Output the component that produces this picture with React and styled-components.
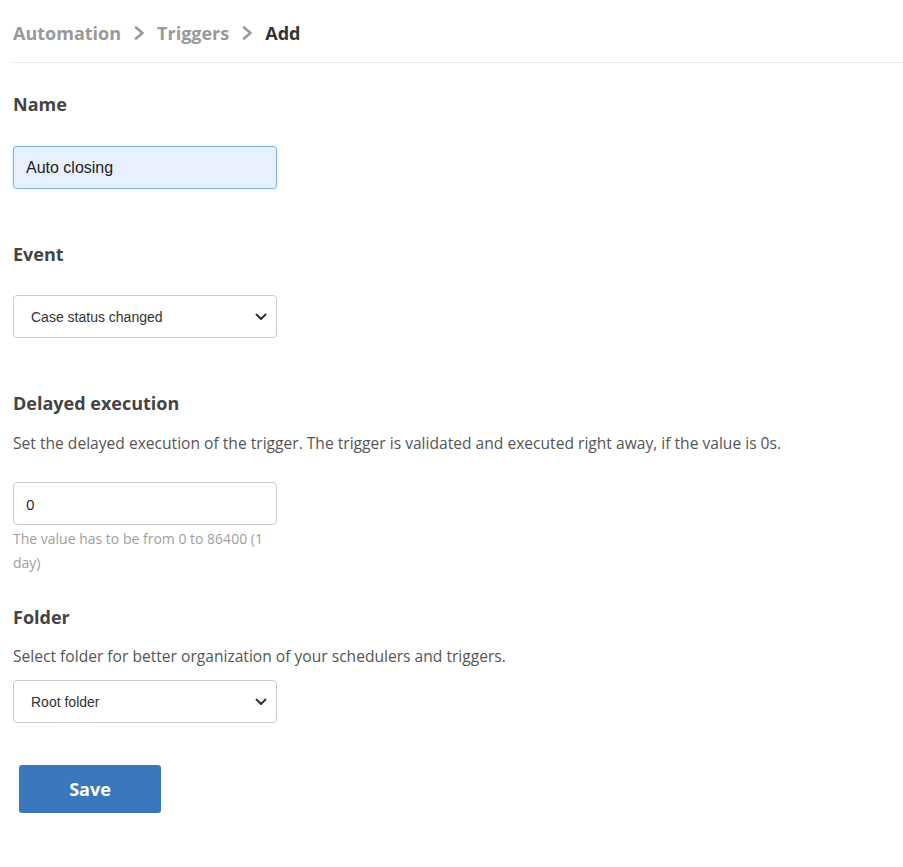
import React from "react";
import styled, { createGlobalStyle } from "styled-components";

const GlobalStyle = createGlobalStyle`
  body {
    margin: 0;
    background: #fff;
    font-family: "Open Sans", sans-serif;
    color: #444;
  }
`;

const Chevron = ({ color = "#999", size = 14 }) => (
  <svg width={size} height={size} viewBox="0 0 14 14" fill="none">
    <polyline
      points="4,1.5 10.5,7 4,12.5"
      stroke={color}
      strokeWidth="2.6"
      strokeLinecap="round"
      strokeLinejoin="round"
    />
  </svg>
);

const Caret = () => (
  <svg width="12" height="8" viewBox="0 0 12 8" fill="none">
    <polyline
      points="1.5,1.5 6,6 10.5,1.5"
      stroke="#333"
      strokeWidth="2"
      strokeLinecap="round"
      strokeLinejoin="round"
    />
  </svg>
);

const Page = styled.div`
  padding: 21px 0 40px 13px;
`;

const Breadcrumb = styled.nav`
  display: flex;
  align-items: center;
  gap: 11px;
  padding-bottom: 17px;
  border-bottom: 1px solid #e6e6e6;
  font-size: 18px;
  line-height: 24px;
  font-weight: 700;
`;

const Crumb = styled.span`
  color: ${(p) => (p.$active ? "#333" : "#999")};
`;

const Form = styled.form`
  padding-top: 29px;
  width: 264px;
`;

const Section = styled.section`
  margin-bottom: ${(p) => p.$gap || 0}px;
`;

const Heading = styled.h3`
  margin: 0 0 ${(p) => p.$gap}px;
  font-size: 18px;
  line-height: 24px;
  font-weight: 700;
  color: #444;
`;

const Description = styled.p`
  margin: 0 0 ${(p) => p.$gap}px;
  width: 820px;
  font-size: 15.6px;
  line-height: 24px;
  color: #555;
`;

const TextInput = styled.input`
  box-sizing: border-box;
  display: block;
  width: 264px;
  height: 43px;
  padding: 0 12px;
  border-radius: 4px;
  border: 1px solid ${(p) => (p.$filled ? "#80b4ec" : "#ccc")};
  background: ${(p) => (p.$filled ? "#e8f0fe" : "#fff")};
  box-shadow: ${(p) => (p.$filled ? "0 0 2px rgba(80,150,230,0.35)" : "none")};
  font-family: ${(p) => (p.$sans ? '"Liberation Sans", Arial, sans-serif' : '"Open Sans", sans-serif')};
  font-size: ${(p) => (p.$sans ? 16 : 15)}px;
  color: #222;
  outline: none;
`;

const SelectBox = styled.div`
  box-sizing: border-box;
  width: 264px;
  height: 43px;
  display: flex;
  align-items: center;
  justify-content: space-between;
  padding: 0 9px 0 17px;
  border: 1px solid #ccc;
  border-radius: 4px;
  background: #fff;
  font-family: "Liberation Sans", Arial, sans-serif;
  font-size: 14px;
  color: #333;
`;

const Helper = styled.div`
  margin-top: 2px;
  font-size: 14px;
  line-height: 24px;
  color: #a0a0a0;
`;

const SaveButton = styled.button`
  margin-left: 6px;
  width: 142px;
  height: 48px;
  border: none;
  border-radius: 3px;
  background: #3a78bd;
  color: #fff;
  font-family: "Open Sans", sans-serif;
  font-size: 18px;
  font-weight: 700;
  cursor: pointer;
`;

const Select = ({ value }) => (
  <SelectBox>
    <span>{value}</span>
    <Caret />
  </SelectBox>
);

export default function App() {
  return (
    <Page>
      <GlobalStyle />
      <Breadcrumb>
        <Crumb>Automation</Crumb>
        <Chevron />
        <Crumb>Triggers</Crumb>
        <Chevron />
        <Crumb $active>Add</Crumb>
      </Breadcrumb>
      <Form onSubmit={(e) => e.preventDefault()}>
        <Section $gap={53}>
          <Heading $gap={30}>Name</Heading>
          <TextInput $filled $sans defaultValue="Auto closing" />
        </Section>
        <Section $gap={53}>
          <Heading $gap={29}>Event</Heading>
          <Select value="Case status changed" />
        </Section>
        <Section $gap={30}>
          <Heading $gap={16}>Delayed execution</Heading>
          <Description $gap={27}>
            Set the delayed execution of the trigger. The trigger is validated and
            executed right away, if the value is 0s.
          </Description>
          <TextInput defaultValue="0" />
          <Helper>The value has to be from 0 to 86400 (1 day)</Helper>
        </Section>
        <Section $gap={42}>
          <Heading $gap={15}>Folder</Heading>
          <Description $gap={12}>
            Select folder for better organization of your schedulers and triggers.
          </Description>
          <Select value="Root folder" />
        </Section>
        <SaveButton type="submit">Save</SaveButton>
      </Form>
    </Page>
  );
}
